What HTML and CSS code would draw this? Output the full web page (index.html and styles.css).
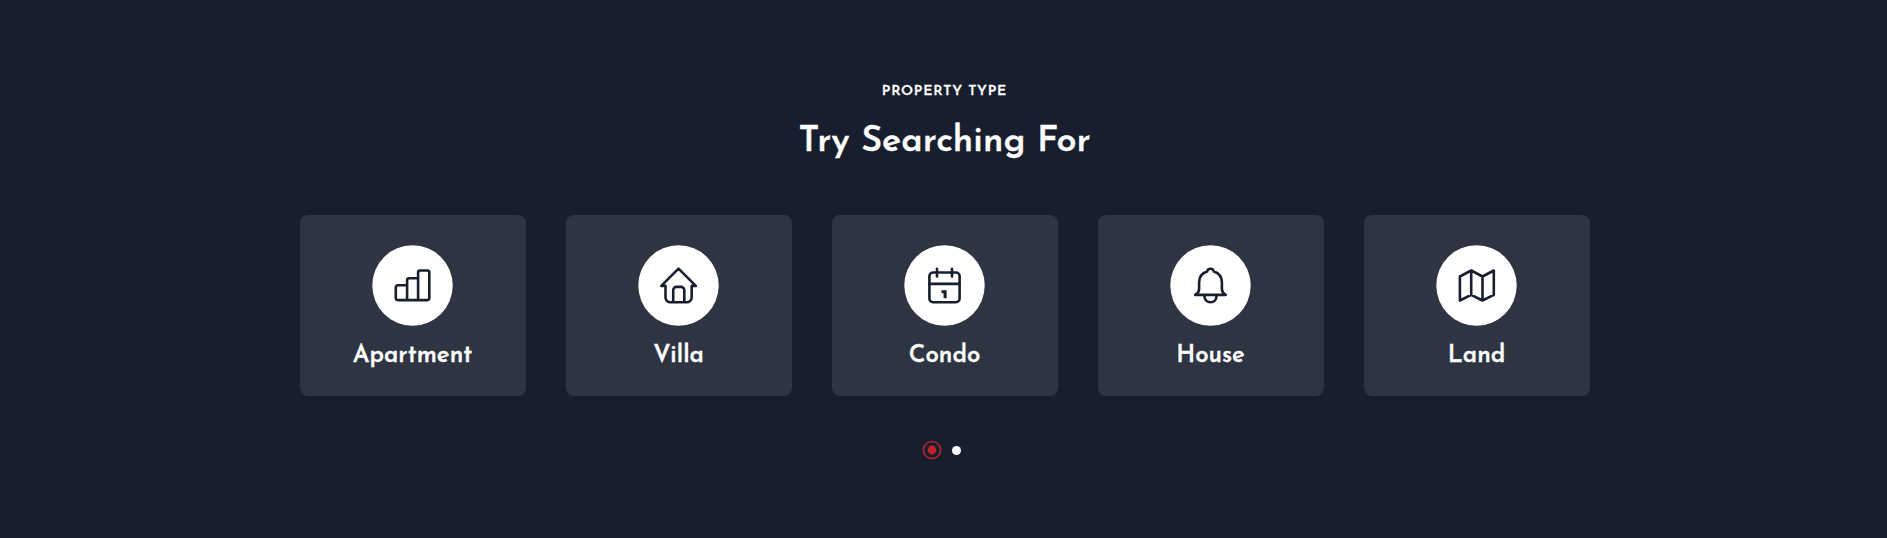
FILE: index.html
```html
<!DOCTYPE html>
<html lang="en">
<head>
<meta charset="utf-8">
<title>Property Type</title>
<link rel="stylesheet" href="styles.css">
</head>
<body>
<section class="property-types">
  <p class="eyebrow">PROPERTY TYPE</p>
  <h2 class="title">Try Searching For</h2>
  <div class="cards">
    <a class="card">
      <svg class="icon" viewBox="-20 -20 81 81"><circle class="disc" cx="20.5" cy="20.5" r="40.2"/><g transform="translate(.5 .5)"><path d="M14.6 34.6H5.3a2 2 0 0 1-2-2V21.8a2 2 0 0 1 2-2h9.3M14.6 34.6V14.7a2 2 0 0 1 2-2h9M14.6 34.6h11V7a2 2 0 0 1 2-2h7.2a2 2 0 0 1 2 2v25.6a2 2 0 0 1-2 2h-9.2"/></g></svg>
      <span class="name">Apartment</span>
    </a>
    <a class="card">
      <svg class="icon" viewBox="-20 -20 81 81"><circle class="disc" cx="20.5" cy="20.5" r="40.2"/><g transform="translate(.5 .5)"><path d="M20 3.2 2.8 20.4H7v11.3a5 5 0 0 0 5 5h16.2a5 5 0 0 0 5-5V20.4h4.1L20 3.2zM14.7 36.5V24.6a3.2 3.2 0 0 1 3.2-3.2h4.7a3.2 3.2 0 0 1 3.2 3.2v11.9"/></g></svg>
      <span class="name">Villa</span>
    </a>
    <a class="card">
      <svg class="icon" viewBox="-20 -20 81 81"><circle class="disc" cx="20.5" cy="20.5" r="40.2"/><g transform="translate(.5 .5)"><rect x="4.9" y="7" width="30.2" height="29.7" rx="3.6"/><path d="M4.9 18.4h30.2M12.5 3.4V11M27.5 3.4V11"/><path class="digit" d="M17 26.2h3.6V32.8"/></g></svg>
      <span class="name">Condo</span>
    </a>
    <a class="card">
      <svg class="icon" viewBox="-20 -20 81 81"><circle class="disc" cx="20.5" cy="20.5" r="40.2"/><g transform="translate(.5 .5)"><path d="M16.6 6.1C16.9 4.2 18.2 3.2 20 3.2s3.1 1 3.4 2.9C28.4 7.7 31.4 12 31.4 17v6.8c0 2.1 1.3 4 3.9 5.6H4.7c2.6-1.6 3.9-3.5 3.9-5.6V17c0-5 3-9.3 8-10.9zM14 29.6v1.1c0 3.7 2.6 6 6 6s6-2.3 6-6v-1.1"/></g></svg>
      <span class="name">House</span>
    </a>
    <a class="card">
      <svg class="icon" viewBox="-20 -20 81 81"><circle class="disc" cx="20.5" cy="20.5" r="40.2"/><g transform="translate(.5 .5)"><path d="M3.4 11 14.7 5 26 11l11.3-6v24.4L26 35l-11.3-5.6L3.4 35zM14.7 5v24.4M26 11v24"/></g></svg>
      <span class="name">Land</span>
    </a>
  </div>
  <div class="dots">
    <svg class="dot-active" viewBox="0 0 20 20"><circle class="ring" cx="10" cy="10" r="8.6"/><circle class="core" cx="10" cy="10" r="4.4"/></svg>
    <span class="dot"></span>
  </div>
</section>
</body>
</html>
```
FILE: styles.css
```css
* { box-sizing: border-box; }
body {
  margin: 0;
  background: #171e2d;
  color: #fff;
  font-family: "Josefin Sans", Lato, sans-serif;
}
.property-types {
  display: flex;
  flex-direction: column;
  align-items: center;
  height: 538px;
  padding: 82px 0 0 2px;
}
.eyebrow {
  margin: 0;
  font-size: 14px;
  line-height: 20px;
  font-weight: 600;
  letter-spacing: 0.8px;
  -webkit-text-stroke: 0.3px #fff;
}
.title {
  margin: 17.5px 0 0;
  font-size: 36px;
  line-height: 44px;
  font-weight: 600;
  white-space: nowrap;
  -webkit-text-stroke: 0.3px #fff;
}
.cards {
  display: grid;
  grid-template-columns: repeat(5, 226px);
  gap: 40px;
  margin-top: 51.5px;
}
.card {
  display: flex;
  flex-direction: column;
  align-items: center;
  height: 181px;
  padding-top: 30px;
  border-radius: 8px;
  background: #2e3442;
}
.icon {
  width: 81px;
  height: 81px;
  fill: none;
  stroke: #171e2d;
  stroke-width: 2.6;
  stroke-linecap: round;
  stroke-linejoin: round;
}
.disc {
  fill: #fff;
  stroke: none;
}
.digit {
  stroke-width: 3;
  stroke-linejoin: miter;
  stroke-linecap: butt;
}
.name {
  margin-top: 15px;
  font-size: 24px;
  line-height: 30px;
  font-weight: 600;
  -webkit-text-stroke: 0.3px #fff;
}
.dots {
  display: flex;
  align-items: center;
  gap: 9.4px;
  margin: 44px 6px 0 0;
}
.dot {
  width: 9px;
  height: 9px;
  border-radius: 50%;
  background: #fff;
}
.dot-active {
  width: 20px;
  height: 20px;
}
.ring {
  fill: none;
  stroke: #c2202c;
  stroke-width: 1.5;
}
.core { fill: #c2202c; }
```
